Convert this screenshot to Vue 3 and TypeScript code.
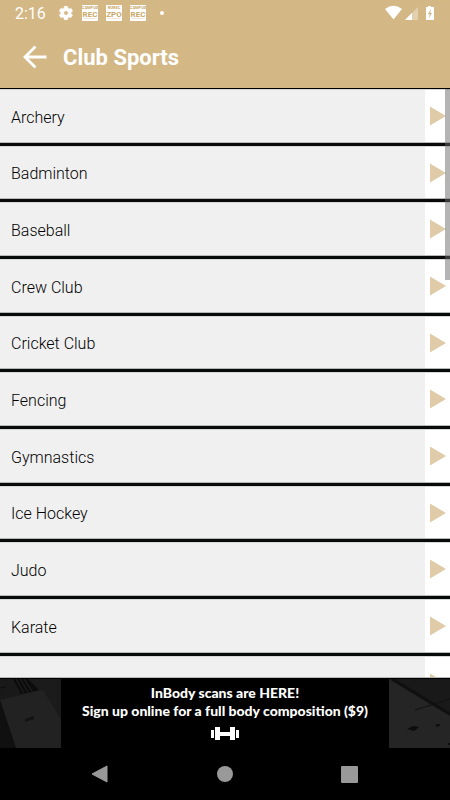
<script setup lang="ts">
import { ref } from 'vue'

const sports = ref<string[]>([
  'Archery',
  'Badminton',
  'Baseball',
  'Crew Club',
  'Cricket Club',
  'Fencing',
  'Gymnastics',
  'Ice Hockey',
  'Judo',
  'Karate',
  'Kendo',
])

const notices = [
  { top: 'CAMPUS', main: 'REC' },
  { top: 'RUREC', main: 'ZPO' },
  { top: 'CAMPUS', main: 'REC' },
]
</script>

<template>
  <div class="screen">
    <header class="top">
      <div class="status">
        <span class="clock">2:16</span>
        <svg class="gear" viewBox="0 0 24 24" aria-hidden="true">
          <path
            fill="#fff"
            fill-rule="evenodd"
            d="M19.4 13c.04-.3.06-.6.06-1s-.02-.7-.06-1l2.1-1.6c.2-.2.3-.5.1-.7l-2-3.4c-.1-.2-.4-.3-.6-.2l-2.500 1c-.5-.4-1.100-.7-1.700-1L14.400 2.400c0-.2-.2-.4-.5-.4h-4c-.3 0-.4.2-.5.4L9 5.100c-.6.3-1.200.6-1.700 1l-2.500-1c-.2-.1-.5 0-.6.2l-2 3.400c-.1.2-.1.5.1.7L4.500 11c-.1.3-.1.700-.1 1s0 .7.1 1l-2.200 1.600c-.2.2-.2.5-.1.700l2 3.400c.1.2.4.3.6.2l2.500-1c.5.4 1.100.7 1.700 1l.4 2.700c.1.2.2.4.5.4h4c.3 0 .5-.2.500-.4l.4-2.700c.6-.3 1.200-.6 1.700-1l2.500 1c.2.1.5 0 .6-.2l2-3.400c.1-.2.1-.5-.1-.7zM12 15.500a3.500 3.500 0 1 1 0-7 3.500 3.500 0 0 1 0 7z"
            stroke="#fff"
          />
        </svg>
        <svg v-for="(n, i) in notices" :key="i" class="notice" viewBox="0 0 16 16" aria-hidden="true">
          <rect width="16" height="16" fill="#fff" />
          <text class="glyph" x="8" y="4" font-size="4" text-anchor="middle">{{ n.top }}</text>
          <text class="glyph" x="8" y="12" font-size="8" text-anchor="middle">{{ n.main }}</text>
          <rect x="2" y="13" width="12" height="1" fill="#d3b785" opacity=".3" />
        </svg>
        <span class="dot"></span>
        <svg class="signals" viewBox="0 0 50 16" aria-hidden="true">
          <path fill="#fff" d="M0 4Q8.500-2.500 17 4L8.500 14.500z" />
          <path fill="#fff" opacity=".35" d="M33 2v13H20z" />
          <path fill="#fff" d="M27 8v7h-7z" />
          <path fill="#fff" d="M43 1h3v1h3v13h-8V2h2z" />
          <path fill="#d3b785" d="M46 4l-3 5h1.600L44 13l3-5h-1.700z" />
        </svg>
      </div>
      <div class="bar">
        <button class="back" type="button" aria-label="Back">
          <svg viewBox="0 0 24 24" aria-hidden="true">
            <path d="M23.500 12H2M12.500 1.500L2 12l10.500 10.500" fill="none" stroke="#fff" stroke-width="2.800" />
          </svg>
        </button>
        <h1>Club Sports</h1>
      </div>
    </header>

    <main class="content">
      <ul class="list">
        <li v-for="sport in sports" :key="sport">
          <a href="#">
            <span class="name">{{ sport }}</span>
            <svg class="arrow" viewBox="0 0 16 20" aria-hidden="true">
              <path d="M0 0.500L16 10 0 19.500z" fill="#dfcba7" />
            </svg>
          </a>
        </li>
      </ul>
      <span class="thumb"></span>
    </main>

    <aside class="banner">
      <svg class="photo" viewBox="0 0 61 69" preserveAspectRatio="none" aria-hidden="true">
        <rect width="61" height="69" fill="#1b1b1b" />
        <path d="M0 0h14l7 15L0 21z" fill="#191919" />
        <path d="M13 0h15l11 11-18 4z" fill="#0c0c0c" />
        <path d="M16 0l8 14M20 0l8 13M24 0l8 12" stroke="#242424" />
        <path d="M0 21l43-10 18 30v28H16z" fill="#222" />
        <path d="M0 21v48h16z" fill="#101010" />
        <path d="M0 9l6-1" stroke="#0c0c0c" />
        <path d="M25 40l9-3v3l-9 3z" fill="#131313" />
      </svg>
      <p class="message">
        <span>InBody scans are HERE!</span>
        <span>Sign up online for a full body composition ($9)</span>
        <svg class="dumbbell" viewBox="0 0 28 14" aria-hidden="true">
          <path fill="#fff" d="M0 3h3v8H0zM4 0h5v13H4zM9 5h10v4H9zM19 0h5v13h-5zM25 3h3v8h-3z" />
        </svg>
      </p>
      <svg class="photo" viewBox="0 0 61 69" preserveAspectRatio="none" aria-hidden="true">
        <rect width="61" height="69" fill="#252525" />
        <path d="M0 0h61v37z" fill="#191919" />
        <path d="M3 0l58 35" stroke="#101010" stroke-width="3" />
        <path d="M26 31l35-11" stroke="#111" />
        <path d="M18 50l6-3 6 1-5 4zM46 46l4-1 2 1-4 2zM59 64h2v2h-2z" fill="#0d0d0d" />
      </svg>
    </aside>

    <nav class="keys">
      <button type="button" aria-label="Back">
        <svg viewBox="0 0 18 18"><path d="M16 1v16L1 9z" fill="#999" stroke="#999" stroke-linejoin="round" /></svg>
      </button>
      <button type="button" aria-label="Home">
        <svg viewBox="0 0 18 18"><circle cx="9" cy="9" r="8" fill="#999" /></svg>
      </button>
      <button type="button" aria-label="Recent apps">
        <svg viewBox="0 0 18 18"><rect x="0" y="1" width="17" height="17" rx="1" fill="#999" /></svg>
      </button>
    </nav>
  </div>
</template>

<style>
body {
  margin: 0;
  background: #000;
}
</style>

<style scoped>
.screen {
  display: flex;
  flex-direction: column;
  height: 100vh;
  background: #000;
  font-family: Roboto, 'Liberation Sans', sans-serif;
}
.screen svg {
  display: block;
}
button {
  padding: 0;
  border: 0;
  background: none;
}
.top {
  background: #d3b785;
  color: #fff;
}
.status {
  display: flex;
  align-items: center;
  gap: 8px;
  height: 26px;
  padding: 0 15px;
}
.clock {
  width: 35px;
  padding-top: 2px;
  font-size: 16px;
  line-height: 24px;
}
.gear {
  width: 16px;
  height: 16px;
}
.notice {
  width: 16px;
  height: 16px;
}
.glyph {
  fill: #c9a768;
  font-family: Roboto, sans-serif;
  font-weight: 700;
}
.dot {
  width: 4px;
  height: 4px;
  margin-left: 6px;
  border-radius: 50%;
  background: #fff;
}
.signals {
  width: 50px;
  height: 16px;
  margin-left: auto;
}
.bar {
  display: flex;
  align-items: center;
  gap: 16px;
  height: 62px;
  padding: 0 23px;
}
.back svg {
  width: 24px;
  height: 24px;
}
h1 {
  margin: 0;
  padding-top: 2px;
  font-size: 22px;
  font-weight: 700;
  line-height: 28px;
}
.content {
  position: relative;
  display: flex;
  flex: 1;
  flex-direction: column;
  min-height: 0;
  border-top: 1px solid #000;
  border-bottom: 1px solid #000;
}
.list {
  flex: 1;
  min-height: 0;
  margin: 0;
  padding: 0;
  overflow-y: auto;
  border-bottom: 1px solid #b8b8b8;
  scrollbar-width: none;
  list-style: none;
}
.list li {
  box-sizing: border-box;
  height: 57px;
  padding-bottom: 3px;
  background: #080909;
}
.list li:nth-child(3n + 2) {
  height: 56px;
}
.list a {
  display: flex;
  align-items: center;
  box-sizing: border-box;
  height: 100%;
  padding-right: 4px;
  border-top: 1px solid #d8d8d8;
  border-bottom: 1px solid #b8b8b8;
  background: #fff;
  color: #000;
  text-decoration: none;
}
.name {
  display: flex;
  flex: 1;
  align-items: center;
  align-self: stretch;
  padding-top: 3px;
  padding-left: 11px;
  background: #f0f0f0;
  font-size: 16px;
  font-weight: 300;
  line-height: 20px;
}
.arrow {
  width: 16px;
  height: 20px;
  margin-left: 5px;
}
.thumb {
  position: absolute;
  top: 0;
  right: 0;
  width: 5px;
  height: 191px;
  background: rgba(105, 105, 105, 0.5);
}
.banner {
  display: flex;
  height: 69px;
}
.photo {
  width: 61px;
  height: 69px;
}
.message {
  display: flex;
  flex: 1;
  flex-direction: column;
  align-items: center;
  margin: 0;
  padding-top: 5px;
  color: #fff;
  font-family: Lato, sans-serif;
  font-size: 14px;
  font-weight: 900;
  line-height: 18px;
  white-space: nowrap;
}
.dumbbell {
  width: 28px;
  height: 14px;
  margin-top: 7px;
}
.keys {
  display: flex;
  align-items: center;
  justify-content: center;
  gap: 107px;
  height: 52px;
}
.keys svg {
  width: 18px;
  height: 18px;
}
</style>
